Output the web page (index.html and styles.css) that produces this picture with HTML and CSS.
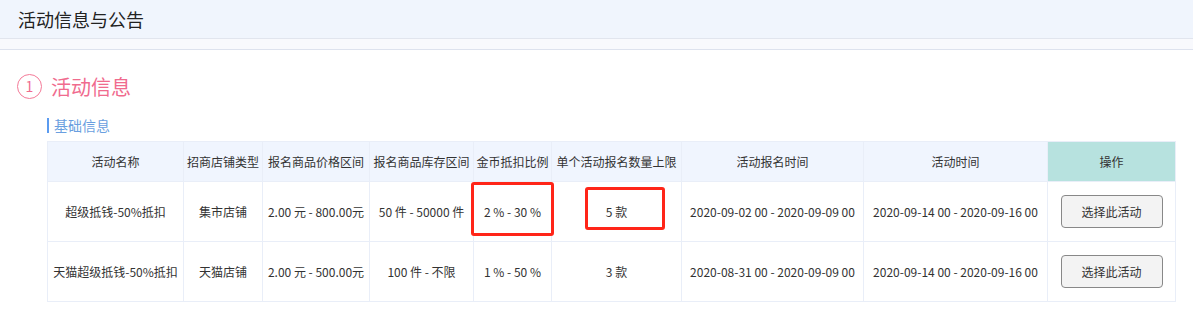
FILE: index.html
```html
<!DOCTYPE html>
<html lang="zh">
<head>
<meta charset="utf-8">
<link rel="stylesheet" href="styles.css">
</head>
<body>
<div class="topbar">活动信息与公告</div>
<div class="strip"></div>
<div class="section">
  <div class="section-title"><span class="num">1</span><span class="title-text">活动信息</span></div>
  <div class="sub-title">基础信息</div>
  <table class="grid">
    <colgroup>
      <col class="c1"><col class="c2"><col class="c3"><col class="c4"><col class="c5"><col class="c6"><col class="c7"><col class="c8"><col class="c9">
    </colgroup>
    <thead>
      <tr>
        <th>活动名称</th><th>招商店铺类型</th><th>报名商品价格区间</th><th>报名商品库存区间</th><th>金币抵扣比例</th><th>单个活动报名数量上限</th><th>活动报名时间</th><th>活动时间</th><th class="op">操作</th>
      </tr>
    </thead>
    <tbody>
      <tr>
        <td>超级抵钱-50%抵扣</td><td>集市店铺</td><td>2.00 元 - 800.00元</td><td>50 件 - 50000 件</td>
        <td class="mark-cell"><span class="mark mark1"></span>2 % - 30 %</td>
        <td class="mark-cell"><span class="mark mark2"></span>5 款</td>
        <td>2020-09-02 00 - 2020-09-09 00</td><td>2020-09-14 00 - 2020-09-16 00</td>
        <td><button class="btn">选择此活动</button></td>
      </tr>
      <tr>
        <td>天猫超级抵钱-50%抵扣</td><td>天猫店铺</td><td>2.00 元 - 500.00元</td><td>100 件 - 不限</td>
        <td>1 % - 50 %</td><td>3 款</td>
        <td>2020-08-31 00 - 2020-09-09 00</td><td>2020-09-14 00 - 2020-09-16 00</td>
        <td><button class="btn">选择此活动</button></td>
      </tr>
    </tbody>
  </table>
</div>
</body>
</html>
```
FILE: styles.css
```css
html, body {
  margin: 0;
  padding: 0;
  background: #ffffff;
  font-family: "Noto Sans CJK SC", "Noto Sans", sans-serif;
  color: #333;
}
.topbar {
  height: 38px;
  line-height: 38px;
  background: #f0f5fd;
  border-bottom: 1px solid #e1e5ee;
  padding-left: 18px;
  font-size: 18px;
  color: #222;
}
.strip {
  height: 10px;
  background: #f8f9fd;
  border-bottom: 1px solid #dde2ee;
}
.section {
  padding: 23px 18px 0 17px;
}
.section-title {
  display: flex;
  align-items: center;
  height: 26px;
}
.num {
  width: 23px;
  height: 23px;
  border: 1px solid #f47a98;
  border-radius: 50%;
  color: #f06b8e;
  font-size: 14px;
  display: flex;
  align-items: center;
  justify-content: center;
  box-sizing: content-box;
}
.title-text {
  margin-left: 9px;
  font-size: 20px;
  color: #f06b8e;
}
.sub-title {
  margin: 19px 0 8px 30px;
  border-left: 2px solid #5b9bf0;
  padding-left: 5px;
  height: 15px;
  line-height: 15px;
  font-size: 14px;
  color: #6a9fe0;
}
.grid {
  margin-left: 30px;
  border-collapse: collapse;
  table-layout: fixed;
  width: 1128px;
  font-size: 12px;
  color: #333;
}
.c1 { width: 136px; }
.c2 { width: 79px; }
.c3 { width: 107px; }
.c4 { width: 104px; }
.c5 { width: 78px; }
.c6 { width: 130px; }
.c7 { width: 182px; }
.c8 { width: 184px; }
.c9 { width: 128px; }
.grid th, .grid td {
  border: 1px solid #e9eef8;
  text-align: center;
  padding: 0;
  white-space: nowrap;
  overflow: visible;
}
.grid th {
  height: 39px;
  background: #f0f5fe;
  font-weight: normal;
  color: #333;
}
.grid th.op {
  background: #b7e2df;
}
.grid td {
  height: 59px;
}
.mark-cell {
  position: relative;
}
.mark {
  position: absolute;
  border: 3px solid #ff2518;
  border-radius: 3px;
  box-sizing: border-box;
}
.mark1 {
  left: -3px;
  top: 0px;
  width: 83px;
  height: 54px;
}
.mark2 {
  left: 33px;
  top: 5px;
  width: 80px;
  height: 43px;
}
.btn {
  width: 102px;
  height: 33px;
  border: 1px solid #888;
  border-radius: 4px;
  background: #f3f3f3;
  font-family: inherit;
  font-size: 12px;
  color: #333;
  padding: 0;
}
```
